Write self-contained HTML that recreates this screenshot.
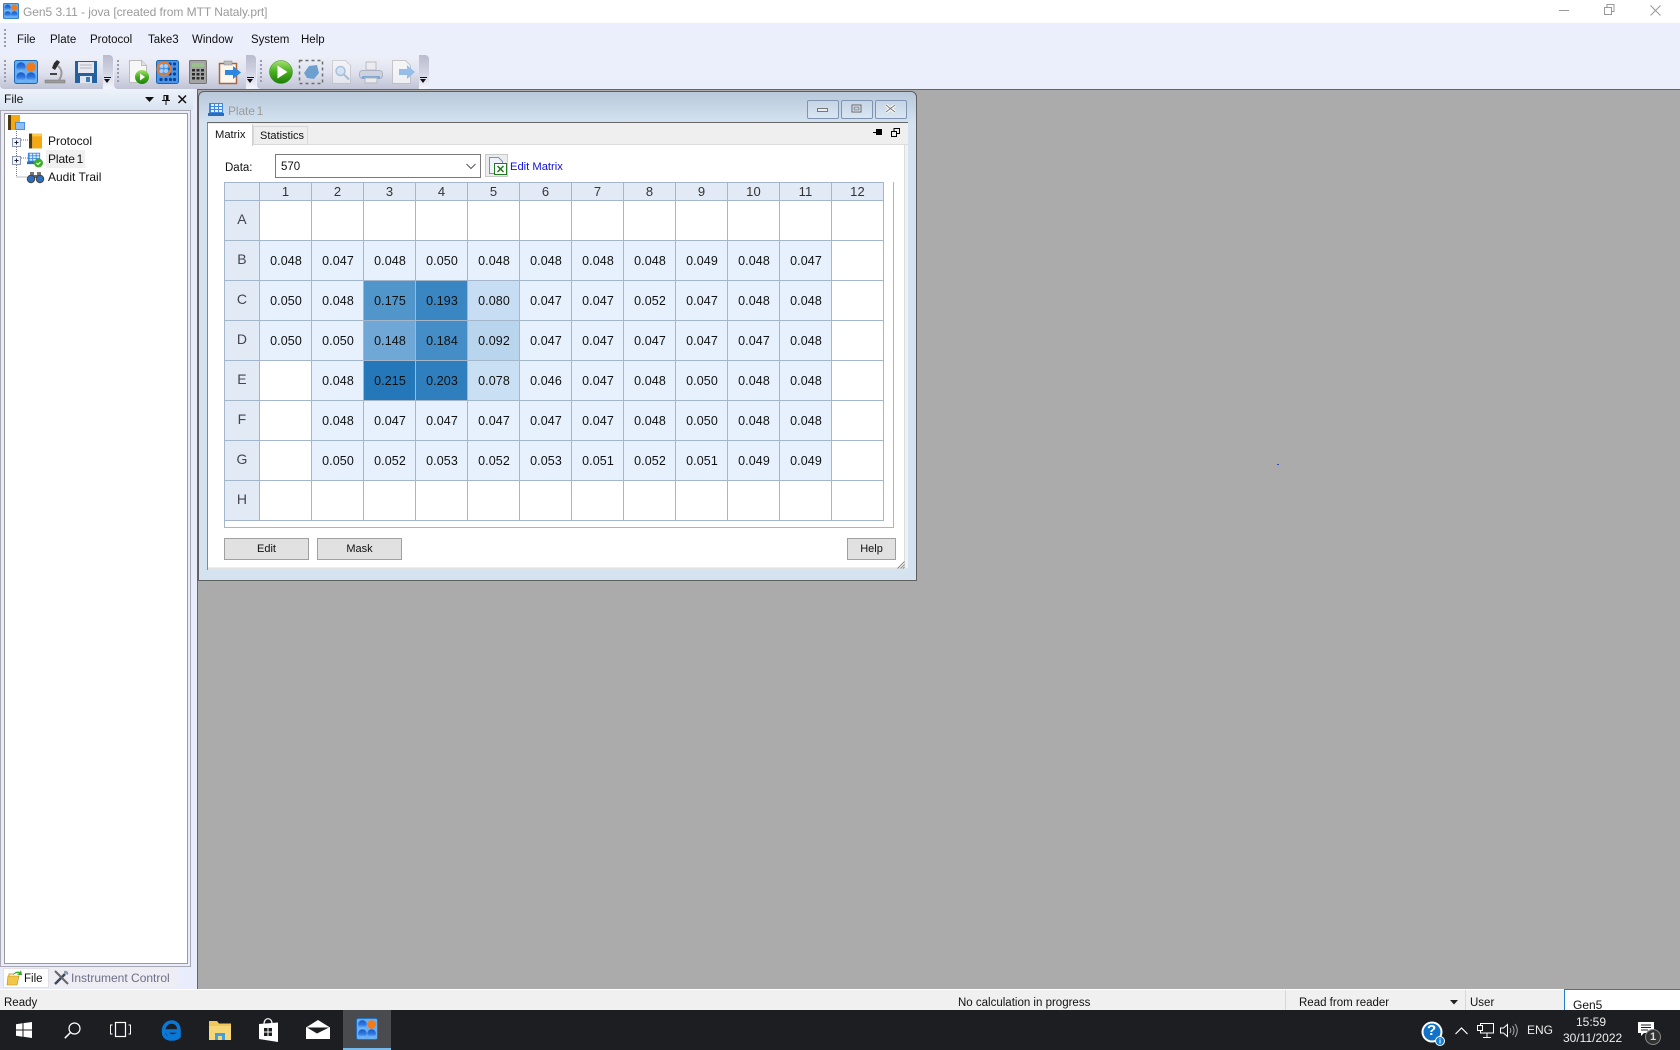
<!DOCTYPE html>
<html><head><meta charset="utf-8"><title>Gen5 3.11</title>
<style>
html,body{margin:0;padding:0;width:1680px;height:1050px;overflow:hidden;background:#ababab;font-family:"Liberation Sans",sans-serif;font-size:12px;color:#111}
.a{position:absolute}
.t{position:absolute;white-space:nowrap;line-height:14px}
svg{position:absolute;overflow:visible}
.bar{position:absolute;top:55px;height:34px;background:linear-gradient(#eef0f9,#e0e2ef 50%,#c0c3d5);border-radius:4px}
.cap{position:absolute;top:55px;height:34px;width:10px;background:linear-gradient(#b9bccd,#d0d3e2 50%,#f4f5fd);border-radius:0 4px 4px 0}
.grip{position:absolute;top:60px;width:2px;height:24px;background:repeating-linear-gradient(#9a9cab 0 2px,transparent 2px 4px)}
.drop{position:absolute;top:77px;width:7px;height:1px;background:#111}
.drop:after{content:"";position:absolute;left:0;top:2px;border:3.5px solid transparent;border-top:4px solid #111;border-bottom:0}
#grid{position:absolute;left:224px;top:182px;display:grid;grid-template-columns:34px repeat(12,51px);grid-template-rows:17px repeat(8,39px);gap:1px;padding:1px;background:#a3b6ca;font-size:12.5px}
#grid>*{display:flex;align-items:center;justify-content:center;font-style:normal;font-weight:normal;text-decoration:none;letter-spacing:.1px}
#grid b{background:#e6f1fd;color:#111;padding-left:1px}
#grid i{background:#fff}
#grid em{background:#e2eaf5;color:#333;font-size:13px}
#grid u{background:#e2eaf5;color:#445;font-size:14px;padding-bottom:3px}
.btn{position:absolute;top:538px;height:20px;background:#e1e1e1;border:1px solid #a0a0a0;text-align:center;line-height:21px;font-size:11px;color:#111;box-sizing:content-box}
.wb{position:absolute;top:100px;width:30px;height:17px;border:1px solid #7f94b0;border-radius:2px;background:linear-gradient(#c6d5e6,#d9e5f2)}
</style></head><body>
<svg width="0" height="0" style="position:absolute">
<defs>
<linearGradient id="cb" x1="0" y1="0" x2="0" y2="1"><stop offset="0" stop-color="#1c56c4"/><stop offset=".55" stop-color="#2f7ae4"/><stop offset="1" stop-color="#8ac2f6"/></linearGradient>
<linearGradient id="cg" x1="0" y1="0" x2="0" y2="1"><stop offset="0" stop-color="#a6e070"/><stop offset=".5" stop-color="#46ae1c"/><stop offset="1" stop-color="#1d7d0d"/></linearGradient>
<symbol id="plate" viewBox="0 0 24 24"><rect x=".5" y=".5" width="23" height="23" rx="2" fill="#66b0f2" stroke="#1c68b5"/><circle cx="7" cy="7" r="4.7" fill="url(#cb)"/><circle cx="17" cy="7" r="4.7" fill="#f07a1e"/><circle cx="7" cy="17" r="4.7" fill="url(#cb)"/><circle cx="17" cy="17" r="4.7" fill="url(#cb)"/></symbol>
<symbol id="mini" viewBox="0 0 16 16"><path d="M1 2h14v10H1z" fill="#3f86dd"/><path d="M0 12h16v3H0z" fill="#2c6cb8"/><g fill="#dff0ff"><rect x="3" y="3" width="3" height="2"/><rect x="7" y="3" width="3" height="2"/><rect x="11" y="3" width="3" height="2"/><rect x="3" y="6" width="3" height="2"/><rect x="7" y="6" width="3" height="2"/><rect x="11" y="6" width="3" height="2"/><rect x="3" y="9" width="3" height="2"/><rect x="7" y="9" width="3" height="2"/><rect x="11" y="9" width="3" height="2"/></g></symbol>
<symbol id="book" viewBox="0 0 14 16"><rect x="0" y="0" width="3.5" height="16" fill="#4d3a10"/><rect x="3.5" y="0" width="10.5" height="16" fill="#f5a810"/><rect x="3.5" y="0" width="10.5" height="3" fill="#fcc94c"/></symbol>
</defs></svg>

<!-- title bar -->
<div class="a" style="left:0;top:0;width:1680px;height:23px;background:#fff"></div>
<svg style="left:3px;top:3px" width="16" height="16"><use href="#plate" width="16" height="16"/></svg>
<div class="t" style="left:23px;top:5px;color:#9a9a9a;font-size:12px;letter-spacing:-.05px">Gen5 3.11 - jova [created from MTT Nataly.prt]</div>
<svg style="left:1559px;top:5px" width="12" height="12"><path d="M0 5.5H10" stroke="#999" fill="none"/></svg>
<svg style="left:1604px;top:4px" width="12" height="12"><path d="M.5 3.5h7v7h-7zM3 3.5V.5h7v7H7.5" stroke="#999" fill="none"/></svg>
<svg style="left:1650px;top:5px" width="12" height="12"><path d="M.5 .5l10 10M10.5 .5l-10 10" stroke="#999" fill="none"/></svg>

<!-- menu + toolbar bg -->
<div class="a" style="left:0;top:23px;width:1680px;height:66px;background:#ebeefb"></div>
<div class="a" style="left:4px;top:29px;width:2px;height:18px;background:repeating-linear-gradient(#9a9cab 0 2px,transparent 2px 4px)"></div>
<div class="t" style="left:17px;top:33px;font-size:11.5px">File</div>
<div class="t" style="left:50px;top:33px;font-size:11.5px">Plate</div>
<div class="t" style="left:90px;top:33px;font-size:11.5px">Protocol</div>
<div class="t" style="left:148px;top:33px;font-size:11.5px">Take3</div>
<div class="t" style="left:192px;top:33px;font-size:11.5px">Window</div>
<div class="t" style="left:251px;top:33px;font-size:11.5px">System</div>
<div class="t" style="left:301px;top:33px;font-size:11.5px">Help</div>

<!-- toolbars -->
<div class="bar" style="left:0;width:106px"></div><div class="cap" style="left:103px"></div>
<div class="bar" style="left:114px;width:135px"></div><div class="cap" style="left:246px"></div>
<div class="bar" style="left:257px;width:165px"></div><div class="cap" style="left:419px"></div>
<div class="grip" style="left:4px"></div><div class="grip" style="left:117px"></div><div class="grip" style="left:260px"></div>
<div class="drop" style="left:104px"></div><div class="drop" style="left:247px"></div><div class="drop" style="left:420px"></div>

<svg style="left:14px;top:60px" width="24" height="24"><use href="#plate" width="24" height="24"/></svg>
<svg style="left:44px;top:60px" width="22" height="24" viewBox="0 0 22 24"><path d="M1 20h20v3H1z" fill="#9a9a9a" stroke="#777" stroke-width=".5"/><path d="M10 3l3-3 3 2-5 8-3-2z" fill="#2c2c2c"/><path d="M6 14h7" stroke="#444" stroke-width="2"/><path d="M14 6c5 4 4 10 1 14" stroke="#999" stroke-width="2" fill="none"/></svg>
<svg style="left:75px;top:61px" width="22" height="22" viewBox="0 0 22 22"><path d="M0 0h22v22H0z" fill="#26619f"/><path d="M3 1h16v11H3z" fill="#e8e8ee"/><path d="M5 4h12M5 7h12" stroke="#b5b5c4"/><path d="M5 15h12v7H5z" fill="#dfe6ef"/><path d="M11 16h4v5h-4z" fill="#3c78b8"/></svg>

<svg style="left:129px;top:60px" width="21" height="25" viewBox="0 0 21 25"><path d="M.5.5h12l5 5v17H.5z" fill="#f7f7f7" stroke="#bcbcbc"/><path d="M12.5.5v5h5" fill="#e0e0e0" stroke="#bcbcbc"/><circle cx="13" cy="17" r="7" fill="url(#cg)"/><path d="M11 13.5l5 3.5-5 3.5z" fill="#fff"/></svg>
<svg style="left:156px;top:60px" width="23" height="24" viewBox="0 0 23 24"><rect x=".5" y=".5" width="22" height="23" rx="2" fill="#4a96e8" stroke="#1a63b2"/><g fill="#0e3f96"><circle cx="14" cy="4" r="1.6"/><circle cx="18.500" cy="4" r="1.6"/><circle cx="14" cy="9" r="1.6"/><circle cx="18.500" cy="9" r="1.6"/><circle cx="14" cy="14" r="1.6"/><circle cx="18.500" cy="14" r="1.6"/><circle cx="5" cy="19.500" r="1.6"/><circle cx="10" cy="19.500" r="1.6"/><circle cx="14.500" cy="19.500" r="1.6"/><circle cx="18.500" cy="19.500" r="1.6"/></g><g fill="#a9cdf5"><circle cx="5.500" cy="6" r="2"/><circle cx="10" cy="6" r="2"/><circle cx="5.500" cy="11" r="2"/><circle cx="10" cy="11" r="2"/></g><circle cx="8" cy="9" r="6.500" fill="none" stroke="#ec7a24" stroke-width="2"/></svg>
<svg style="left:189px;top:60px" width="18" height="24" viewBox="0 0 18 24"><rect x=".5" y=".5" width="17" height="23" rx="1" fill="#a4a4a4" stroke="#777"/><rect x="3" y="3" width="12" height="4" fill="#9cc08a"/><g fill="#2c2c2c"><rect x="3" y="9" width="3" height="2.500"/><rect x="7.500" y="9" width="3" height="2.500"/><rect x="12" y="9" width="3" height="2.500"/><rect x="3" y="13" width="3" height="2.500"/><rect x="7.500" y="13" width="3" height="2.500"/><rect x="12" y="13" width="3" height="2.500"/><rect x="3" y="17" width="3" height="2.500"/><rect x="7.500" y="17" width="3" height="2.500"/><rect x="12" y="17" width="3" height="2.500"/></g></svg>
<svg style="left:219px;top:61px" width="22" height="23" viewBox="0 0 22 23"><rect x=".5" y="2.500" width="17" height="20" fill="#fbf6ee" stroke="#a9683a" stroke-width="1.500"/><rect x="5" y="0" width="8" height="4" fill="#bdbdbd" stroke="#888" stroke-width=".5"/><path d="M6 9h8V5l8 6.500-8 6.500v-4H6z" fill="#2e86e0"/></svg>

<svg style="left:269px;top:60px" width="24" height="24" viewBox="0 0 24 24"><circle cx="12" cy="12" r="11.500" fill="url(#cg)" stroke="#2e8d18" stroke-width=".5"/><path d="M8.500 5.500l10 6.500-10 6.500z" fill="#fff"/></svg>
<svg style="left:299px;top:60px" width="24" height="24" viewBox="0 0 24 24"><rect x=".5" y=".5" width="23" height="23" fill="none" stroke="#6d6d6d" stroke-width="1.500" stroke-dasharray="3 3"/><path d="M5 13l5-7 8-1 2 8-5 6-7-1z" fill="#6da0cf"/></svg>
<svg style="left:332px;top:60px" width="20" height="24" viewBox="0 0 20 24" opacity=".55"><path d="M.5.500h13l5 5v18H.5z" fill="#fafafa" stroke="#bcbcbc"/><circle cx="8.500" cy="11" r="4.500" fill="#cfe3f5" stroke="#7da7cc" stroke-width="1.500"/><path d="M12 14.500l5 5" stroke="#7da7cc" stroke-width="2"/></svg>
<svg style="left:359px;top:62px" width="24" height="22" viewBox="0 0 24 22" opacity=".7"><path d="M7 0h10v8H7z" fill="#eee" stroke="#aaa"/><rect x=".5" y="8.500" width="23" height="8" rx="3" fill="#c9ced9" stroke="#98a0b0"/><path d="M3 14h18v3H3z" fill="#5b93c9"/><path d="M6 16h12v5H6z" fill="#f5f5f5" stroke="#aaa"/></svg>
<svg style="left:392px;top:60px" width="23" height="24" viewBox="0 0 23 24" opacity=".75"><path d="M.5.500h13l5 5v18H.5z" fill="#fafafa" stroke="#bcbcbc"/><path d="M7 9h8V5l8 7-8 7v-4H7z" fill="#7fb2ea"/></svg>

<!-- left panel -->
<div class="a" style="left:0;top:89px;width:197px;height:900px;background:#e9ecfb"></div>
<div class="a" style="left:0;top:89px;width:193px;height:21px;background:linear-gradient(#eef2fa,#d9e4f2)"></div>
<div class="t" style="left:4px;top:92px">File</div>
<svg style="left:145px;top:97px" width="9" height="6"><path d="M0 0h9L4.500 5z" fill="#111"/></svg>
<svg style="left:162px;top:95px" width="8" height="10"><path d="M2 .5h4v5H2zM0 5.500h8M4 5.500V10" stroke="#111" fill="none"/><path d="M4 1h2v4H4z" fill="#111"/></svg>
<svg style="left:178px;top:95px" width="9" height="9"><path d="M.5.500l7.500 7.500M8 .500L.5 8" stroke="#111" stroke-width="1.500" fill="none"/></svg>
<div class="a" style="left:0;top:110px;width:191px;height:857px;border:1px solid #a8a8b4;border-left-width:1px;box-sizing:border-box;background:#e9ecfb"></div>
<div class="a" style="left:4px;top:113px;width:184px;height:851px;border:1px solid #9a9a9a;box-sizing:border-box;background:#fff"></div>

<!-- tree -->
<svg style="left:8px;top:115px" width="17" height="16" viewBox="0 0 17 16"><rect x="0" y="0" width="3" height="15" fill="#4d3a10"/><rect x="3" y="0" width="9" height="15" fill="#f5a810"/><path d="M7 7h10v8H7z" fill="#4a90e2"/><path d="M8 9h8M8 11h8M8 13h8" stroke="#d8eaff"/></svg>
<svg style="left:12px;top:129px" width="34" height="50"><path d="M4.500 0V48M9 11h8M9 29h8M4.500 48H15" stroke="#777" stroke-dasharray="1 1" fill="none"/><rect x=".5" y="9.500" width="8" height="8" fill="#f4f6ff" stroke="#8b98b8"/><path d="M2.500 13.500h4M4.500 11.500v4" stroke="#223" /><rect x=".5" y="27.500" width="8" height="8" fill="#f4f6ff" stroke="#8b98b8"/><path d="M2.500 31.500h4M4.500 29.500v4" stroke="#223"/></svg>
<svg style="left:29px;top:133px" width="13" height="16"><use href="#book" width="13" height="16"/></svg>
<div class="t" style="left:48px;top:134px">Protocol</div>
<svg style="left:27px;top:151px" width="16" height="16"><use href="#mini" width="14" height="14"/><circle cx="11.500" cy="12" r="4.500" fill="#3cb02a"/><path d="M9.500 12l1.500 1.500 2.500-2.500" stroke="#fff" fill="none"/></svg>
<div class="a" style="left:46px;top:150px;width:39px;height:18px;background:#f0f0f0"></div>
<div class="t" style="left:48px;top:152px;letter-spacing:-.1px;word-spacing:-1.5px">Plate 1</div>
<svg style="left:27px;top:171px" width="17" height="12" viewBox="0 0 17 12"><path d="M3 1h4v4H3zM10 1h4v4h-4z" fill="#777"/><path d="M5 4h7v3H5z" fill="#666"/><circle cx="4" cy="8" r="3.700" fill="#2c6fc0" stroke="#444"/><circle cx="13" cy="8" r="3.700" fill="#2c6fc0" stroke="#444"/></svg>
<div class="t" style="left:48px;top:170px">Audit Trail</div>

<!-- bottom tabs -->
<div class="a" style="left:3px;top:968px;width:46px;height:20px;background:#fff;border:1px solid #e0e0e6;box-sizing:border-box"></div>
<svg style="left:7px;top:970px" width="16" height="16" viewBox="0 0 16 16"><path d="M1 6h11l-2 9H0z" fill="#f3c64a" stroke="#b88a1e" stroke-width=".6"/><path d="M2 6V4h5" stroke="#c8a030" fill="none"/><path d="M6 5c1-3 4-4 7-3l1-2 1 5-5 0 2-1.500C10 2.500 8 3.500 6 5z" fill="#3aa52c"/></svg>
<div class="t" style="left:24px;top:972px;font-size:11.5px">File</div>
<div class="a" style="left:50px;top:968px;width:127px;height:19px;background:#ededf3"></div>
<svg style="left:54px;top:970px" width="15" height="15" viewBox="0 0 15 15"><path d="M1 14L11 4" stroke="#39475f" stroke-width="2.500"/><path d="M1 1l13 13" stroke="#666" stroke-width="2"/><path d="M10 1c3-1 5 1 4 4l-2-1-2-1z" fill="#8d9bb0"/></svg>
<div class="t" style="left:71px;top:971px;color:#6e6e88">Instrument Control</div>

<!-- MDI area -->
<div class="a" style="left:197px;top:89px;width:1483px;height:900px;background:#ababab;border-top:1px solid #666;border-left:1px solid #666;box-sizing:border-box"></div>
<div class="a" style="left:1277px;top:464px;width:2px;height:1px;background:#3344cc"></div>

<!-- child window -->
<div class="a" style="left:198px;top:91px;width:719px;height:490px;box-sizing:border-box;border:1px solid #5f5f5f;border-radius:6px 6px 0 0;background:linear-gradient(#b9c9da 0,#d5e3f1 32px,#d5e3f1 100%)"></div>
<svg style="left:208px;top:101px" width="16" height="16"><use href="#mini" width="16" height="16"/></svg>
<div class="t" style="left:228px;top:104px;color:#9b9b9b;letter-spacing:-.1px;word-spacing:-1.5px">Plate 1</div>
<div class="wb" style="left:807px"></div><div class="wb" style="left:841px"></div><div class="wb" style="left:875px"></div>
<svg style="left:817px;top:106px" width="12" height="8"><rect x=".5" y="2.500" width="10" height="3" fill="#e8eef6" stroke="#777"/></svg>
<svg style="left:851px;top:104px" width="12" height="10"><rect x="1" y="1" width="9" height="7" fill="#e8eef6" stroke="#666" stroke-width="1"/><rect x="3" y="3" width="5" height="3" fill="#c6d5e6" stroke="#666" stroke-width=".7"/></svg>
<svg style="left:885px;top:104px" width="12" height="10"><path d="M1 1l9 7M10 1l-9 7" stroke="#fff" stroke-width="3"/><path d="M1 1l9 7M10 1l-9 7" stroke="#777" stroke-width="1"/></svg>

<div class="a" style="left:207px;top:122px;width:701px;height:448px;background:#fff;border-top:1px solid #666;border-left:1px solid #888;box-sizing:border-box"></div>
<div class="a" style="left:208px;top:123px;width:700px;height:22px;background:#efefef;border-bottom:1px solid #dcdcdc;box-sizing:border-box"></div>
<div class="a" style="left:904px;top:145px;width:4px;height:425px;background:#eef2f7;border-left:1px solid #dcdcdc;box-sizing:border-box"></div>
<div class="a" style="left:208px;top:567px;width:700px;height:3px;background:#e2e2e2;border-top:1px solid #eee;box-sizing:border-box"></div>
<div class="a" style="left:208px;top:124px;width:45px;height:22px;background:#fff;border-right:1px solid #d0d0d0;box-sizing:border-box"></div>
<div class="a" style="left:253px;top:126px;width:55px;height:19px;background:#eee;border:1px solid #d8d8d8;box-sizing:border-box"></div>
<div class="t" style="left:215px;top:128px;font-size:11.2px">Matrix</div>
<div class="t" style="left:260px;top:129px;font-size:11px">Statistics</div>
<svg style="left:873px;top:128px" width="9" height="9"><path d="M0 4.500h3M3.500 1.500h5v5h-5z" stroke="#000" fill="none"/><rect x="4" y="2" width="4" height="4" fill="#000"/></svg>
<svg style="left:891px;top:128px" width="9" height="9"><path d="M.5 3.500h5v5h-5zM3 3V.5h5.500v5H6" stroke="#000" fill="none" stroke-width="1"/></svg>

<div class="t" style="left:225px;top:161px;font-size:11.5px">Data:</div>
<div class="a" style="left:275px;top:154px;width:206px;height:24px;border:1px solid #7a7a7a;box-sizing:border-box;background:#fff"></div>
<div class="t" style="left:281px;top:160px;font-size:11.5px">570</div>
<svg style="left:466px;top:163px" width="10" height="7"><path d="M.5 1l4.500 4.500L9.500 1" stroke="#555" fill="none"/></svg>
<div class="a" style="left:485px;top:154px;width:23px;height:23px;background:#ececec;border:1px solid #c9c9c9;box-sizing:border-box"></div>
<svg style="left:489px;top:157px" width="18" height="18" viewBox="0 0 18 18"><path d="M.5 .5h9l4 4v12H.5z" fill="#eef3fb" stroke="#7b93b5"/><rect x="5.500" y="6.500" width="12" height="11" fill="#fff" stroke="#1f7a1f"/><path d="M8.500 9l6 6M14.500 9l-6 6" stroke="#1f7a1f" stroke-width="1.500"/></svg>
<div class="t" style="left:510px;top:160px;color:#1010e0;font-size:11.2px">Edit Matrix</div>

<!-- grid outer -->
<div class="a" style="left:224px;top:182px;width:670px;height:346px;border:1px solid #a3b6ca;box-sizing:border-box;background:#fff;border-top:0;border-left:1px solid #a3b6ca"></div>
<div id="grid">
<em></em><em>1</em><em>2</em><em>3</em><em>4</em><em>5</em><em>6</em><em>7</em><em>8</em><em>9</em><em>10</em><em>11</em><em>12</em>
<u>A</u><i></i><i></i><i></i><i></i><i></i><i></i><i></i><i></i><i></i><i></i><i></i><i></i>
<u>B</u><b>0.048</b><b>0.047</b><b>0.048</b><b>0.050</b><b>0.048</b><b>0.048</b><b>0.048</b><b>0.048</b><b>0.049</b><b>0.048</b><b>0.047</b><i></i>
<u>C</u><b>0.050</b><b>0.048</b><b style="background:#5096cb">0.175</b><b style="background:#3a86c2">0.193</b><b style="background:#c6ddf3">0.080</b><b>0.047</b><b>0.047</b><b>0.052</b><b>0.047</b><b>0.048</b><b>0.048</b><i></i>
<u>D</u><b>0.050</b><b>0.050</b><b style="background:#6fa8d6">0.148</b><b style="background:#458dc6">0.184</b><b style="background:#b9d5ee">0.092</b><b>0.047</b><b>0.047</b><b>0.047</b><b>0.047</b><b>0.047</b><b>0.048</b><i></i>
<u>E</u><i></i><b>0.048</b><b style="background:#2478ba">0.215</b><b style="background:#2f7fbe">0.203</b><b style="background:#c9dff3">0.078</b><b>0.046</b><b>0.047</b><b>0.048</b><b>0.050</b><b>0.048</b><b>0.048</b><i></i>
<u>F</u><i></i><b>0.048</b><b>0.047</b><b>0.047</b><b>0.047</b><b>0.047</b><b>0.047</b><b>0.048</b><b>0.050</b><b>0.048</b><b>0.048</b><i></i>
<u>G</u><i></i><b>0.050</b><b>0.052</b><b>0.053</b><b>0.052</b><b>0.053</b><b>0.051</b><b>0.052</b><b>0.051</b><b>0.049</b><b>0.049</b><i></i>
<u>H</u><i></i><i></i><i></i><i></i><i></i><i></i><i></i><i></i><i></i><i></i><i></i><i></i>
</div>

<div class="btn" style="left:224px;width:83px">Edit</div>
<div class="btn" style="left:317px;width:83px">Mask</div>
<div class="btn" style="left:847px;width:47px">Help</div>
<svg style="left:897px;top:561px" width="8" height="8"><path d="M7.500 .5l-7 7M7.500 3.500l-4 4M7.500 6l-1.500 1.500" stroke="#888" fill="none"/></svg>

<!-- status bar -->
<div class="a" style="left:0;top:989px;width:1680px;height:21px;background:#f0f0f0;border-top:1px solid #fff;box-sizing:border-box"></div>
<div class="t" style="left:4px;top:996px;font-size:11.5px">Ready</div>
<div class="t" style="left:958px;top:996px;font-size:11.5px">No calculation in progress</div>
<div class="a" style="left:1285px;top:990px;width:1px;height:20px;background:#d8d8d8"></div>
<div class="t" style="left:1299px;top:996px;font-size:11.5px">Read from reader</div>
<svg style="left:1450px;top:1000px" width="8" height="5"><path d="M0 0h8L4 4.500z" fill="#222"/></svg>
<div class="a" style="left:1465px;top:990px;width:1px;height:20px;background:#d8d8d8"></div>
<div class="t" style="left:1470px;top:996px;font-size:11.5px">User</div>

<!-- taskbar -->
<div class="a" style="left:0;top:1010px;width:1680px;height:40px;background:#1c1e22"></div>
<div class="a" style="left:1564px;top:989px;width:116px;height:21px;background:#fff;border-top:1px solid #1e7fd0;border-left:1px solid #1e7fd0;box-sizing:border-box"></div>
<div class="t" style="left:1573px;top:998px;font-size:12px">Gen5</div>
<svg style="left:16px;top:1022px" width="16" height="16" viewBox="0 0 16 16"><path d="M0 2.200l6.500-.9V7.500H0zM7.500 1.100L16 0v7.500H7.500zM0 8.500h6.500v6.200L0 13.800zM7.500 8.500H16V16l-8.500-1.200z" fill="#fff"/></svg>
<svg style="left:64px;top:1022px" width="17" height="17" viewBox="0 0 17 17"><circle cx="10.500" cy="6.500" r="5.500" fill="none" stroke="#fff" stroke-width="1.200"/><path d="M6.500 10.500L.8 16.200" stroke="#fff" stroke-width="1.500"/></svg>
<svg style="left:110px;top:1022px" width="21" height="16" viewBox="0 0 21 16"><rect x="5.500" y=".5" width="10" height="14" fill="none" stroke="#fff" stroke-width="1.200"/><path d="M2.500 3H.5v9h2M18.500 3h2v9h-2" fill="none" stroke="#fff"/></svg>
<svg style="left:161px;top:1019px" width="21" height="22" viewBox="0 0 21 22"><path d="M3 12H18C18 6 15 3 10.500 3S2.500 7 2.500 12.500 6 20 11 20c3 0 5.500-1 7-2.500v-3c-2 1.500-4 2.500-6.500 2.500-3 0-5-1.800-5.200-4.500" fill="none" stroke="#0a78d7" stroke-width="3.600"/></svg>
<svg style="left:209px;top:1021px" width="22" height="19" viewBox="0 0 22 19"><path d="M0 0h8l2 2.500h12V19H0z" fill="#f1c75a"/><path d="M0 5h22v14H0z" fill="#f6d676"/><path d="M6 12h10v7H6z" fill="#3fa0e0"/><path d="M9 15h4v4H9z" fill="#f6d676"/></svg>
<svg style="left:258px;top:1018px" width="21" height="24" viewBox="0 0 21 24"><path d="M1 6l19-1.500V24L1 21z" fill="#fff"/><path d="M6 6c0-7 8-7 8-.5" fill="none" stroke="#fff" stroke-width="1.200"/><path d="M6 10h3.500v3.500H6zM10.500 10H14v3.500h-3.500zM6 14.500h3.500V18H6zM10.500 14.500H14V18h-3.500z" fill="#1c1e22"/></svg>
<svg style="left:306px;top:1020px" width="24" height="19" viewBox="0 0 24 19"><path d="M0 7.500L12 0l12 7.500V19H0z" fill="#fff"/><path d="M1 7.500l22 0-12 6z" fill="#1c1e22"/></svg>
<div class="a" style="left:343px;top:1010px;width:48px;height:40px;background:#4a4b4e"></div>
<div class="a" style="left:343px;top:1048px;width:48px;height:2px;background:#76b9ed"></div>
<svg style="left:356px;top:1018px" width="22" height="22"><use href="#plate" width="22" height="22"/></svg>

<svg style="left:1421px;top:1021px" width="24" height="24" viewBox="0 0 24 24"><circle cx="11" cy="11" r="10.500" fill="#fff"/><circle cx="11" cy="11" r="8.500" fill="#1272c7"/><circle cx="19" cy="20" r="4.500" fill="#1280d6" stroke="#fff" stroke-width="1"/><path d="M19 18.500v4M19 17v.7" stroke="#fff"/></svg>
<div class="t" style="left:1427px;top:1024px;color:#fff;font-size:15px;font-weight:bold">?</div>
<svg style="left:1455px;top:1027px" width="13" height="8"><path d="M.5 7L6.500 1l6 6" fill="none" stroke="#fff" stroke-width="1.200"/></svg>
<svg style="left:1477px;top:1023px" width="17" height="15" viewBox="0 0 17 15"><path d="M3.500 .5h13v9.500h-13zM10 10v4M6 14.500h8" fill="none" stroke="#fff"/><rect x=".5" y="2.500" width="5" height="5" fill="#1c1e22" stroke="#fff"/></svg>
<svg style="left:1500px;top:1023px" width="17" height="15" viewBox="0 0 17 15"><path d="M.5 5h3L7.500 1.500v12L3.500 10h-3z" fill="none" stroke="#fff"/><path d="M10 5c1 1.500 1 3.500 0 5M12.500 3c2 2.500 2 6.500 0 9M15 1c3 4 3 9 0 13" fill="none" stroke="#aaa"/></svg>
<div class="t" style="left:1527px;top:1023px;color:#eee;font-size:12px">ENG</div>
<div class="t" style="left:1576px;top:1015px;color:#eee;font-size:12px">15:59</div>
<div class="t" style="left:1563px;top:1031px;color:#eee;font-size:12px">30/11/2022</div>
<svg style="left:1638px;top:1022px" width="26" height="24" viewBox="0 0 26 24"><path d="M0 0h16v11H6l-3 3v-3H0z" fill="#fff"/><path d="M3 3h10M3 5.500h10M3 8h7" stroke="#1c1e22"/><circle cx="15" cy="15" r="7.500" fill="#333" stroke="#888"/></svg>
<div class="t" style="left:1650px;top:1030px;color:#ddd;font-size:11px;font-weight:bold">1</div>
</body></html>
